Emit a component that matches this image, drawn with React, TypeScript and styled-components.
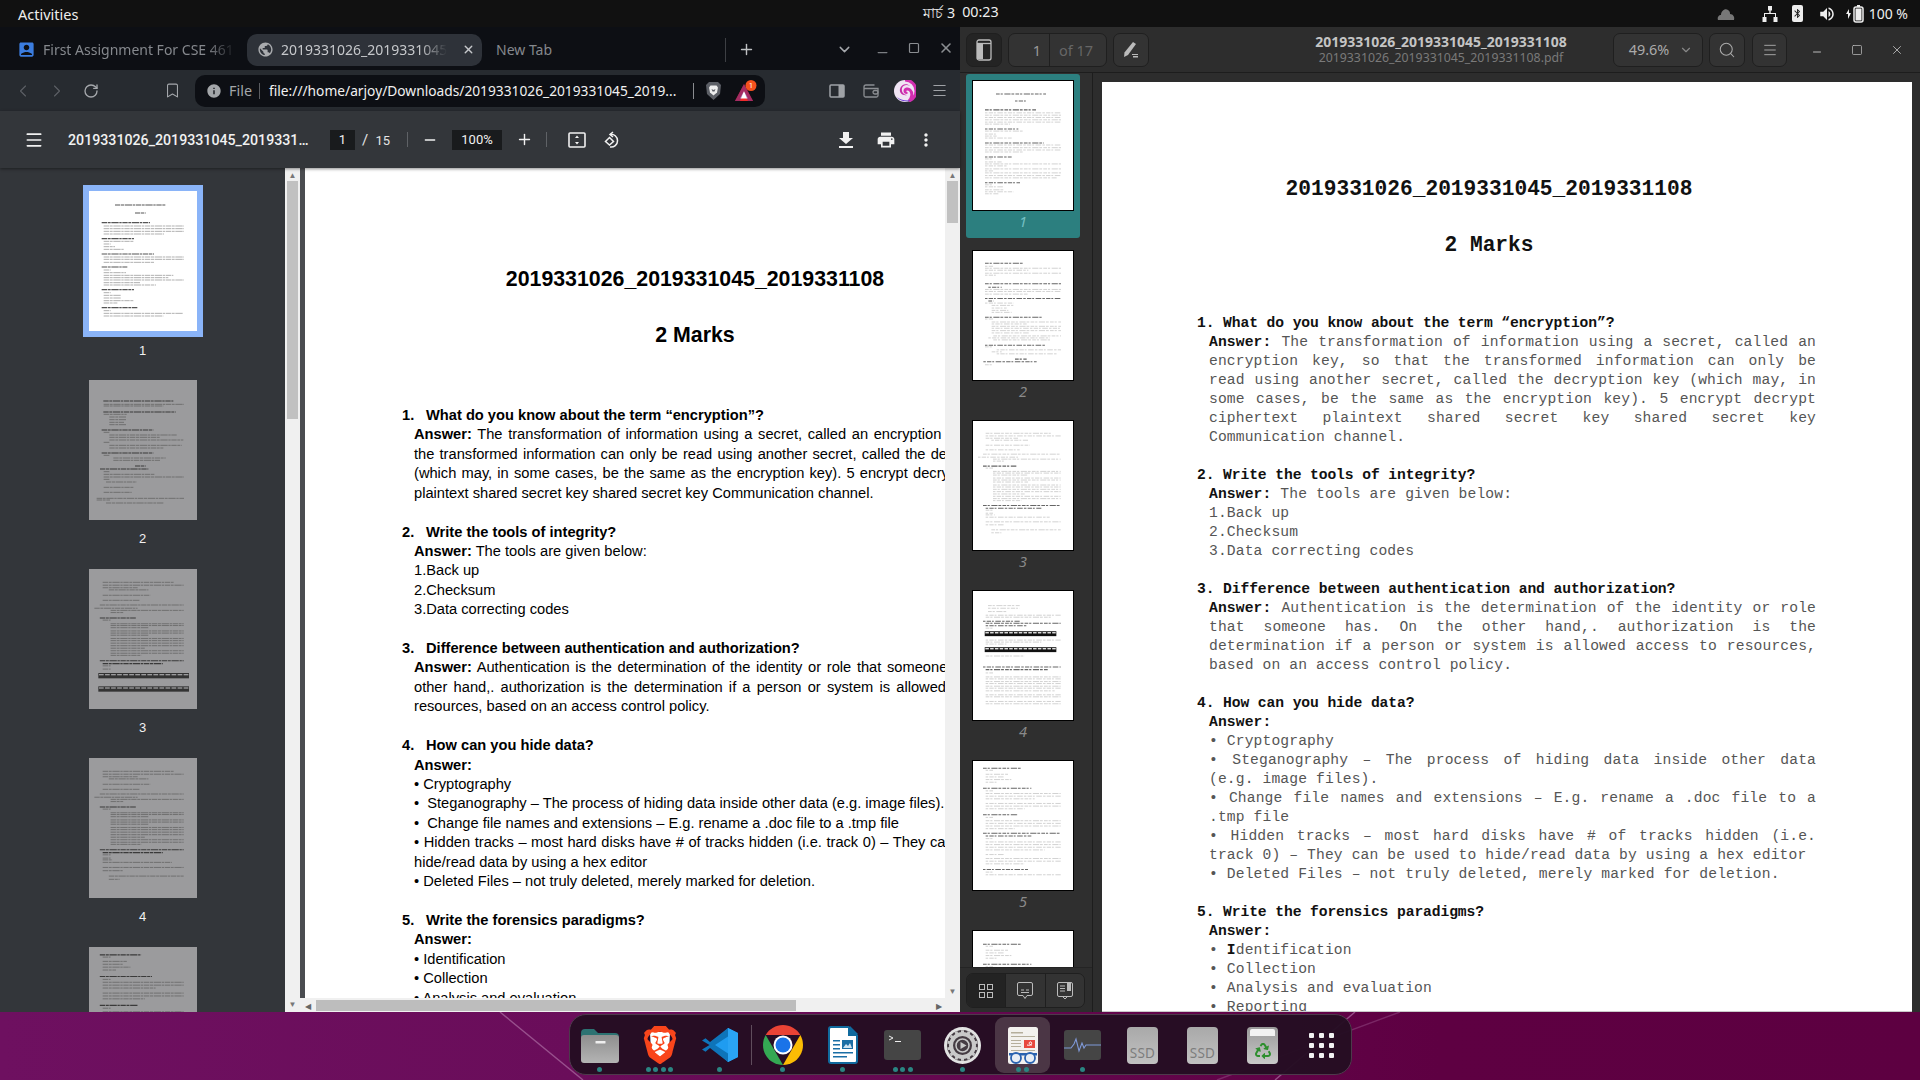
import React from "react";
import styled, { createGlobalStyle } from "styled-components";
import { SiBrave } from "react-icons/si";
import { FaRecycle } from "react-icons/fa";
import {
  MdPublic, MdPrint, MdMoreVert, MdInfo, MdAccountBox, MdVolumeUp, MdBluetooth,
} from "react-icons/md";
import {
  Menu, ChevronLeft, ChevronRight, ChevronDown, RotateCw, Bookmark, Plus, Minus, X, Square, Search,
} from "lucide-react";

const UI = `"Noto Sans", "Open Sans", sans-serif`;

const Global = createGlobalStyle`
  html, body { margin: 0; padding: 0; overflow: hidden; background: #5d0041; }
  * { box-sizing: border-box; }
`;

const Screen = styled.div`
  width: 1920px; height: 1080px; overflow: hidden; display: flex; flex-direction: column;
  font-family: ${UI};
`;

/* ---------- top bar ---------- */
const TopBar = styled.div`
  height: 27px; background: #111; color: #eee; font-size: 14.5px;
  display: grid; grid-template-columns: 1fr auto 1fr; align-items: center; padding: 0 12px 0 18px;
`;
const Clock = styled.div`display: flex; gap: 7px; margin: 1px 0 0 -4px; font-size: 14.3px;`;
const Tray = styled.div`display: flex; align-items: center; justify-content: flex-end; color: #eee;`;
const TrayText = styled.span`font-size: 14px;`;

/* ---------- windows ---------- */
const Windows = styled.div`display: flex; height: 985px;`;
const BrowserWindow = styled.div`width: 960px; display: flex; flex-direction: column; background: #33363a;`;
const TabStrip = styled.div`height: 43px; background: #0d0f14; display: flex; align-items: center; padding-left: 8px; color: #888b90; font-size: 14px; padding-top: 2px;`;
const Tab = styled.div<{ $active?: boolean }>`
  width: 235px; height: 32px; margin-right: 4px; border-radius: 10px; display: flex; align-items: center;
  gap: 7px; padding: 0 6px 0 10px; flex: none;
  background: ${(p) => (p.$active ? "#2e3239" : "transparent")};
  color: ${(p) => (p.$active ? "#c6c8cb" : "#85888d")};
`;
const TabTitle = styled.span<{ $fade?: boolean }>`
  flex: 1; overflow: hidden; white-space: nowrap;
  ${(p) => (p.$fade ? "mask-image: linear-gradient(90deg, #000 84%, transparent 100%);" : "")}
`;
const VSep = styled.div<{ $h: number; $c?: string; $m?: string }>`
  width: 1px; height: ${(p) => p.$h}px; background: ${(p) => p.$c || "#4a4d52"}; flex: none; margin: ${(p) => p.$m || "0"};
`;
const Slot = styled.div<{ $w?: number; $c?: string }>`
  width: ${(p) => p.$w || 32}px; display: flex; justify-content: center; align-items: center; flex: none;
  color: ${(p) => p.$c || "#a5a8ac"};
`;
const Gap = styled.div<{ $w: number }>`width: ${(p) => p.$w}px; flex: none;`;

const NavBar = styled.div`height: 41px; background: #272b30; display: flex; align-items: center; padding-left: 6px;`;
const UrlBar = styled.div`
  width: 570px; height: 32px; background: #0d0f14; border-radius: 10px; display: flex; align-items: center;
  padding-left: 11px; flex: none; font-size: 14.4px; color: #f1f1f1;
`;
const UrlKind = styled.span`color: #a3a6a9; margin-left: 7px; width: 30px;`;
const UrlText = styled.span`width: 424px; margin-left: 9px; white-space: nowrap; font-size: 13.75px;`;

const PdfBar = styled.div`
  height: 57px; background: #33363a; display: flex; align-items: center; color: #f1f1f1;
  box-shadow: 0 1px 3px rgba(0,0,0,.45); position: relative; z-index: 2; font-family: Roboto, sans-serif;
`;
const PdfName = styled.div`width: 245px; margin-left: 17px; font-size: 14.2px; font-weight: 500; white-space: nowrap;`;
const PdfBox = styled.div<{ $w: number }>`
  width: ${(p) => p.$w}px; height: 20px; background: #191b1d; display: flex; align-items: center; justify-content: center;
  font-size: 13px; flex: none;
`;
const PdfMuted = styled.span`font-size: 13px; margin-left: 7px; width: 36px; color: #e4e4e4;`;
const PdfSlash = styled.span`font-size: 15px; margin-right: 4px;`;

const Viewer = styled.div`flex: 1; display: flex; min-height: 0;`;
const ThumbRail = styled.div`
  width: 285px; background: #33363a; overflow: hidden; padding-top: 17px; display: flex; flex-direction: column;
  align-items: center; flex: none;
`;
const LeftThumb = styled.div<{ $on?: boolean }>`
  width: ${(p) => (p.$on ? 120 : 108)}px; height: ${(p) => (p.$on ? 152 : 140)}px; flex: none;
  ${(p) => (p.$on ? "border: 6px solid #8ab4f8; background: #fff;" : "")}
  svg { display: block; width: 100%; height: 100%; filter: blur(.25px); }
`;
const LeftLabel = styled.div<{ $on?: boolean }>`
  height: ${(p) => (p.$on ? 43 : 49)}px; display: flex; align-items: center; justify-content: center;
  padding-bottom: ${(p) => (p.$on ? 17 : 13)}px;
  color: #f1f1f1; font: 13px "Liberation Sans", sans-serif; flex: none;
`;
const ScrollCol = styled.div<{ $pb?: number }>`
  width: 15px; background: #f0f0f0; display: flex; flex-direction: column; align-items: center; flex: none; padding: 1px 0 ${(p) => p.$pb || 0}px;
`;
const Thumbie = styled.div<{ $t: number; $h: number }>`
  width: 11px; height: ${(p) => p.$h}px; margin-top: ${(p) => p.$t}px; background: #c1c1c1; flex: none;
`;
const ArrowBox = styled.div`height: 11px; color: #777; font-size: 8px; line-height: 11px; text-align: center; flex: none;`;
const ColFill = styled.div`flex: 1;`;
const DocColumn = styled.div`flex: 1; min-width: 0; display: flex; flex-direction: column;`;
const DocRow = styled.div`flex: 1; min-height: 0; display: flex;`;
const Gutter = styled.div`width: 5px; background: #4a4c50; flex: none;`;
const Sheet = styled.div`
  width: 640px; flex: none; background: #fff; overflow: hidden; color: #000;
  padding: 98px 0 0 97px; font: 14.67px/19.42px "Liberation Sans", Arial, sans-serif;
`;
const BigTitle = styled.div`width: 586px; text-align: center; font-size: 21.33px; font-weight: 700; line-height: 26px;`;
const Marks = styled(BigTitle)`margin: 30px 0 58px;`;
const Block = styled.div`margin-bottom: 19.42px;`;
const Head = styled.div`font-weight: 700; white-space: nowrap; display: flex; gap: 0;`;
const HeadNum = styled.span`width: 24px; flex: none;`;
const Line = styled.div<{ $w?: number }>`
  margin-left: 12px; width: 580px; white-space: nowrap; word-spacing: ${(p) => p.$w || 0}px;
`;
const HBar = styled.div`
  height: 14px; background: #f0f0f0; display: flex; align-items: center; color: #666; font-size: 8px; flex: none;
`;
const HThumb = styled.div`width: 480px; height: 11px; background: #bdbdbd; margin: 0 140px 0 5px; flex: none;`;

/* ---------- evince ---------- */
const ReaderWindow = styled.div`width: 960px; display: flex; flex-direction: column; background: #2d2d2d;`;
const ReaderBar = styled.div`
  height: 46px; flex: none; background: #2d2d2d; border-bottom: 1px solid #1d1d1d; display: flex; align-items: center; padding: 0 3px 0 6px;
`;
const RBtn = styled.div<{ $w?: number; $on?: boolean; $gap?: number }>`
  width: ${(p) => p.$w || 36}px; height: 34px; flex: none; border-radius: 7px; border: 1px solid #1f1f1f;
  background: ${(p) => (p.$on ? "#242424" : "#333")}; display: flex; align-items: center; justify-content: center;
  color: #aaa; gap: ${(p) => p.$gap || 7}px; font-size: 14.4px;
`;
const ZoomBtn = styled(RBtn)`padding-left: 6px;`;
const PageEntry = styled(RBtn)`gap: 0; justify-content: flex-start; width: 99px; font-size: 14.5px;`;
const PageNum = styled.div`width: 41px; text-align: right; padding-right: 8px; color: #9a9a9a; border-right: 1px solid #1f1f1f; height: 100%; line-height: 32px;`;
const PageOf = styled.div`padding-left: 9px; color: #666;`;
const Heading = styled.div`width: 300px; margin-left: 142px; text-align: center; flex: none; line-height: 15px;`;
const HeadTop = styled.div`font-size: 14px; font-weight: 700; color: #c4c4c4; line-height: 16px;`;
const HeadSub = styled.div`font-size: 12.3px; color: #7a7a7a;`;
const ReaderBody = styled.div`flex: 1; min-height: 0; display: flex;`;
const ReaderSide = styled.div`
  width: 133px; flex: none; background: #2f2f2f; display: flex; flex-direction: column; border-right: 1px solid #1d1d1d;
`;
const ThumbList = styled.div`flex: 1; min-height: 0; overflow: hidden; padding: 1px 6px 0;`;
const ThumbCell = styled.div<{ $on?: boolean }>`
  width: 114px; height: 164px; margin-bottom: 6px; padding-top: 6px; border-radius: 3px;
  background: ${(p) => (p.$on ? "#2c7f7f" : "transparent")}; display: flex; flex-direction: column; align-items: center;
`;
const ThumbPage = styled.div`
  width: 102px; height: 131px; background: #fff; border: 1px solid #000; flex: none;
  svg { display: block; width: 100%; height: 100%; }
`;
const ThumbNo = styled.div<{ $on?: boolean }>`
  font: italic 14.5px/20px ${UI}; color: ${(p) => (p.$on ? "#74c0c4" : "#8a8a8a")};
`;
const SideFoot = styled.div`height: 45px; flex: none; border-top: 1px solid #242424; padding: 5px 6px; background: #2d2d2d;`;
const Seg = styled.div`
  display: flex; height: 35px; width: 119px; border: 1px solid #1f1f1f; border-radius: 7px; overflow: hidden;
`;
const SegBtn = styled.div<{ $on?: boolean }>`
  flex: 1; display: flex; align-items: center; justify-content: center; color: #bbb;
  background: ${(p) => (p.$on ? "#232323" : "#333")}; border-right: 1px solid #1f1f1f;
  &:last-child { border-right: 0; }
`;
const ReaderMain = styled.div`flex: 1; min-width: 0; padding: 9px 7px 0 9px; overflow: hidden; background: #2d2d2d;`;
const RSheet = styled.div`
  height: 100%; width: 810px; background: #fff; overflow: hidden; padding: 95px 0 0 95px; color: #555;
  font: 14.67px/19px "Liberation Mono", "Courier New", monospace; border-bottom: 1px solid #c9c9c9;
`;
const RTitle = styled.div`width: 584px; text-align: center; font-size: 21.2px; font-weight: 700; line-height: 24px; color: #111;`;
const RMarks = styled(RTitle)`margin: 32px 0 57px;`;
const RBlock = styled.div`margin-bottom: 19px;`;
const RHead = styled.div`font-weight: 700; color: #111; white-space: nowrap; letter-spacing: -.1px;`;
const RLine = styled.div<{ $just?: boolean }>`
  margin-left: 12px; width: 607px; white-space: ${(p) => (p.$just ? "normal" : "nowrap")}; letter-spacing: .12px;
  ${(p) => (p.$just ? "text-align: justify; text-align-last: justify;" : "")}
  b { color: #111; }
`;

/* ---------- dock ---------- */
const DockRow = styled.div`
  height: 68px; position: relative; display: flex; justify-content: center; padding-top: 2px; flex: none;
  background: linear-gradient(90deg, #6e1060 0%, #6a0d5a 30%, #5e0042 75%, #5d0041 100%);
`;
const Streaks = styled.svg`position: absolute; left: 0; top: 0; width: 1920px; height: 68px;`;
const Dock = styled.div`
  position: relative; width: 783px; height: 61px; display: flex; border-radius: 17px; border: 1px solid #4d3a4b;
  background: rgba(36, 14, 34, .96);
`;
const DockItem = styled.div<{ $on?: boolean }>`
  width: 60px; flex: none; position: relative; display: flex; flex-direction: column; align-items: center;
  padding-top: 7px;
  ${(p) => p.$on ? `&::before { content: ""; position: absolute; left: 2px; right: 3px; top: 2px; bottom: 1px; border-radius: 9px; background: #4b3645; }` : ""}
`;
const IconBox = styled.div`height: 46px; display: flex; align-items: center; justify-content: center; position: relative;`;
const DotRow = styled.div`display: flex; gap: 2.5px; height: 5px; margin-top: -1px; position: relative;`;
const Dot = styled.div`width: 5px; height: 5px; border-radius: 50%; background: #2a8582;`;
const DockSep = styled.div`width: 1px; height: 40px; background: #5f4c5c; margin: 10px 1px 0; flex: none;`;

/* ---------- page data ---------- */
type L = [number, number, number, number?];
const P1L: L[] = [[105,345,497,1],[129,405,437,1],[158,305,450,1],[168,311,552],[176,311,552],[184,311,552],[192,311,492],[206,305,402,1],[214,311,402],[222,311,332],[230,311,345],[238,311,372],[252,305,462,1],[261,311,552],[268,311,552],[277,311,462],[291,305,382,1],[300,311,332],[308,311,378],[316,311,520],[323,311,505],[330,311,552],[338,311,420],[345,311,468],[359,305,402,1],[368,311,332],[376,311,362],[384,311,362],[392,311,402],[399,311,352],[413,305,412,1],[422,311,332],[430,311,548],[438,311,490]];
const P2L: L[] = [[693,310,520,1],[703,311,552],[708,311,490],[726,310,527,1],[733,311,380],[741,328,378],[749,328,378],[757,328,372],[764,328,378],[780,305,460,1],[787,311,330],[795,328,530],[802,328,480],[810,328,550],[817,311,330],[826,328,545],[834,328,490],[849,305,460,1],[856,311,330],[864,340,497],[871,340,480],[888,405,437,1],[897,300,445,1],[905,311,330],[913,311,465],[921,311,552],[928,311,330],[936,318,410],[952,311,400],[967,311,395],[985,290,552],[990,290,330],[999,318,490]];
const R1: L[] = [[72,108,258,1],[93,165,200,1],[120,75,228,1],[129,75,303],[136,75,303],[143,75,303],[150,75,303],[157,75,303],[163,75,150],[178,75,175,1],[184,75,188],[193,75,108],[199,75,110],[205,75,155],[220,75,252,1],[226,75,303],[234,75,303],[241,75,303],[247,75,190],[262,75,155,1],[268,75,100],[277,75,125],[283,75,303],[289,75,140],[298,75,303],[304,75,100],[310,75,303],[318,75,303],[325,75,290],[340,75,180,1],[346,75,100],[352,75,130],[361,75,130],[367,75,160],[373,75,115]];
const R2: L[] = [[580,75,190,1],[589,75,100],[595,75,303],[601,75,205],[610,75,303],[616,75,110],[642,75,303,1],[652,85,125,1],[659,75,303],[665,75,303],[673,75,205],[686,75,303,1],[694,85,100,1],[700,75,160],[707,95,160],[715,95,140],[722,95,145],[728,95,155],[743,75,245,1],[748,75,100],[757,95,303],[763,95,200],[770,95,303],[776,95,303],[783,95,303],[790,95,210],[799,100,303],[805,85,270],[811,100,270],[827,75,258,1],[832,75,100],[841,110,303],[847,95,125],[853,110,290],[869,165,200,1],[877,70,230,1],[886,75,100]];
const R3: L[] = [[55,63,260],[63,63,288],[70,63,160],[76,80,190],[91,63,195],[105,63,165],[118,55,288],[127,40,160],[133,85,288],[139,85,120],[154,55,155,1],[160,63,85],[170,85,288],[175,85,288],[181,85,190],[190,85,288],[196,85,288],[202,85,190],[211,85,288],[217,85,288],[224,85,288],[231,85,288],[238,85,180],[245,85,288],[252,85,288],[258,85,170],[273,55,288,1],[281,63,230,1],[287,63,85],[296,63,85],[301,63,90],[308,63,255],[322,63,288],[331,63,120],[346,80,288],[355,80,110]];
const R4: L[] = [[572,70,165],[580,70,165],[590,70,125],[601,63,288],[607,63,260],[619,55,165,1],[625,63,288,1],[633,63,185,1],[640,63,85],[676,63,288],[682,63,230],[688,63,125],[724,63,180],[757,55,288,1],[765,63,250,1],[775,63,85],[787,63,288],[793,63,288],[801,63,288],[807,63,288],[815,63,288],[821,63,288],[829,63,270],[841,63,288],[847,63,288],[861,63,288],[868,63,288]];
const R5: L[] = [[40,55,170,1],[46,63,85],[58,63,130],[66,63,120],[74,63,140],[82,63,100],[100,55,200,1],[108,63,85],[116,63,288],[124,63,288],[132,63,210],[146,63,288],[154,63,288],[162,63,180],[180,55,160,1],[188,63,85],[198,63,288],[206,63,288],[214,63,288],[222,63,150],[236,55,288,1],[244,63,200,1],[252,63,85],[262,63,288],[270,63,288],[278,63,288],[286,63,240],[300,63,120],[312,63,288],[320,63,288],[328,63,180],[345,55,190,1],[353,63,85],[361,63,288]];

const lineColor = (bold: boolean, dim?: boolean, soft?: boolean) => {
  if (dim) return bold ? "#3a3a3a" : "#6a6a6a";
  if (soft) return bold ? "#666" : "#c6c6c6";
  return bold ? "#555" : "#a4a4a4";
};

type Tbl = [number, number, number];
const Page = ({ lines, ox, oy, k = 1, tables = [], dim, soft }: { lines: L[]; ox: number; oy: number; k?: number; tables?: Tbl[]; dim?: boolean; soft?: boolean }) => (
  <svg viewBox="0 0 324 420" preserveAspectRatio="none">
    {dim && <rect width="324" height="420" fill="#9b9b9d" />}
    {lines.map(([y, a, b, bold], i) => (
      <line
        key={i}
        x1={(a - ox) * k} x2={(b - ox) * k} y1={(y - oy) * k} y2={(y - oy) * k}
        stroke={lineColor(!!bold, dim, soft)}
        strokeWidth={bold ? 3.4 : 2.6}
        strokeDasharray={soft ? (i % 2 ? "8 4 14 3 6 5 18 4" : "12 3 7 5 20 3 9 4") : "16 2 9 2 22 2 7 2"}
      />
    ))}
    {tables.map(([y, a, b], i) => (
      <g key={"t" + i}>
        <rect x={a} y={y} width={b - a} height={16} fill={dim ? "#333" : "#111"} />
        {Array.from({ length: 15 }).map((_, j) => (
          <rect key={j} x={a + 2 + (j * (b - a)) / 15} y={y + 3} width={(b - a) / 15 - 4} height={4} fill={dim ? "#9b9b9d" : "#fff"} />
        ))}
      </g>
    ))}
  </svg>
);

const P1 = <Page lines={P1L} ox={267} oy={63} />;
const P2 = <Page lines={P2L} ox={267} oy={630} dim />;
const P3 = <Page lines={R3.slice(0, 30)} ox={25} oy={18} k={1.08} dim tables={[[312, 28, 300], [352, 28, 300]]} />;
const P4 = <Page lines={R3} ox={25} oy={18} k={1.08} dim />;
const P5 = <Page lines={R5} ox={25} oy={18} k={1.08} dim />;

const leftThumbs = [P2, P3, P4];
const readerThumbs = [
  <Page lines={R1} ox={39} oy={33} k={1.08} soft />,
  <Page lines={R2} ox={39} oy={543} k={1.08} soft />,
  <Page lines={R3} ox={25} oy={18} k={1.08} soft />,
  <Page lines={R4} ox={25} oy={528} k={1.08} soft tables={[[131, 38, 270], [183, 38, 270]]} />,
  <Page lines={R5} ox={25} oy={18} k={1.08} soft />,
  <Page lines={R5.slice(0, 8)} ox={25} oy={0} k={1.08} soft />,
];

/* ---------- small svg icons ---------- */
const FitIcon = () => (
  <svg width="18" height="16" viewBox="0 0 18 16" fill="none" stroke="#f1f1f1" strokeWidth="1.6">
    <rect x="1" y="1" width="16" height="14" rx="1" />
    <path d="M9 3.5l-2 2.5h4zM9 12.5l-2-2.5h4z" fill="#f1f1f1" stroke="none" />
  </svg>
);
const RotateIcon = () => (
  <svg width="18" height="18" viewBox="0 0 18 18" fill="none" stroke="#f1f1f1" strokeWidth="1.5">
    <path d="M6 3.4A6.4 6.4 0 1 1 6 16" />
    <path d="M9 1L6 3.4 9 6" />
    <path d="M5.5 6.5L9.5 10.5 5.5 14 1.5 10.5z" />
  </svg>
);
const DownloadIcon = () => (
  <svg width="14" height="16" viewBox="0 0 14 16" fill="#f1f1f1">
    <path d="M4 0h6v6h4L7 12 0 6h4zM0 14h14v2H0z" />
  </svg>
);
const SidePanelIcon = () => (
  <svg width="16" height="14" viewBox="0 0 16 14" fill="none" stroke="#9fa2a6" strokeWidth="1.5">
    <rect x="1" y="1" width="14" height="12" rx="1" /><rect x="9.5" y="1" width="5.5" height="12" fill="#9fa2a6" stroke="none" />
  </svg>
);
const WalletIcon = () => (
  <svg width="16" height="14" viewBox="0 0 16 14" fill="none" stroke="#8b8e92" strokeWidth="1.3">
    <path d="M1 4.5V11.5a1.5 1.5 0 0 0 1.5 1.5h11a1.5 1.5 0 0 0 1.5-1.5V4.5zM1 4.5V3a2 2 0 0 1 2-2h8.5" /><rect x="10" y="6.5" width="5" height="3.5" rx="1.7" />
  </svg>
);
const ProfileIcon = () => (
  <svg width="22" height="22" viewBox="0 0 22 22">
    <circle cx="11" cy="11" r="11" fill="#f0e4f4" />
    <path d="M11 0a11 11 0 0 1 11 11 11 11 0 0 1-7 10c3-3 4-8 1-11-2-2-5-1-5 1 0 1 1 2 2 1" fill="none" stroke="#d22fb0" strokeWidth="3" />
    <path d="M3 17c3 5 11 5 14 3-5 1-11 0-14-3z" fill="#6a38d6" />
    <path d="M6 9c1-5 7-6 10-3-3-2-7-1-8 2-1 4 2 7 5 7-4 1-8-2-7-6z" fill="#c52aa8" />
  </svg>
);
const ShieldIcon = () => (
  <svg width="15" height="18" viewBox="0 0 15 18">
    <path d="M3 0h9l3 3-1 9-6.500 6L1 12 0 3z" fill="#5c5f66" />
    <path d="M4.500 3.500h6l1.500 2-1 5-3.500 3-3.500-3-1-5z" fill="#eee" />
    <path d="M5.500 7l2 1 2-1-1 2.500h-2z" fill="#5c5f66" />
  </svg>
);
const BatIcon = () => (
  <svg width="24" height="22" viewBox="0 0 24 22">
    <path d="M9 4L18 21H0z" fill="#ef2b2b" />
    <path d="M9 11L13 18.500H5z" fill="#fff" />
    <path d="M9 4L18 21H13L9 11 5 21H0z" fill="#662d91" opacity=".55" />
    <circle cx="16" cy="5.500" r="5.500" fill="#f4511e" />
    <text x="16" y="8" textAnchor="middle" fontSize="7" fontFamily="Roboto, sans-serif" fill="#fff">1</text>
  </svg>
);
const PanelToggle = () => (
  <svg width="16" height="22" viewBox="0 0 16 22" fill="none" stroke="#bbb" strokeWidth="1.3">
    <rect x="1" y="1" width="14" height="20" rx="2" /><rect x="1" y="5" width="6" height="15" fill="#bbb" stroke="none" />
    <path d="M1 4.500h14" />
  </svg>
);
const PencilIcon = () => (
  <svg width="16" height="16" viewBox="0 0 16 16" fill="#bbb">
    <path d="M10 0l3 2-8 11-4 2 .5-4.500z" /><path d="M9 12h6v1H9zM10 14h5v1.500h-5z" />
  </svg>
);
const GridIcon = () => (
  <svg width="14" height="14" viewBox="0 0 14 14" fill="none" stroke="#bbb">
    <rect x=".5" y=".5" width="5" height="5" /><rect x="8.500" y=".5" width="5" height="5" /><rect x=".5" y="8.500" width="5" height="5" /><rect x="8.500" y="8.500" width="5" height="5" />
  </svg>
);
const NoteIcon = () => (
  <svg width="16" height="18" viewBox="0 0 16 18" fill="none" stroke="#bbb">
    <path d="M2 .5h12a1.500 1.500 0 0 1 1.500 1.500v10a1.500 1.500 0 0 1-1.500 1.500h-4L8 16.500 6 13.500H2A1.500 1.500 0 0 1 .5 12V2A1.500 1.500 0 0 1 2 .5z" />
    <path d="M4 8h3M9 8h3M4 10.500h8" />
  </svg>
);
const BookIcon = () => (
  <svg width="16" height="18" viewBox="0 0 16 18" fill="none" stroke="#bbb">
    <rect x=".5" y=".5" width="15" height="14" rx="1.500" /><path d="M3 4h5M3 6.500h5M3 9h5" /><rect x="10" y="0" width="4" height="9" fill="#bbb" stroke="none" /><path d="M6 15l2 2 2-2" />
  </svg>
);
const CloudIcon = () => (
  <svg width="18" height="12" viewBox="0 0 18 12" fill="#777"><path d="M1 12c-1-3 1-5 3-5 0-4 4-7 7-5 2 1 2 3 2 4 3 0 5 3 4 6z" /></svg>
);
const NetIcon = () => (
  <svg width="16" height="16" viewBox="0 0 16 16" fill="#eee"><path d="M6 0h4v4.500H8.700V7H14v4h1.500v5h-4v-5H13V8H3v3h1.500v5h-4v-5H2V7h5.300V4.500H6z" /></svg>
);
const BattIcon = () => (
  <svg width="20" height="18" viewBox="0 0 20 18" fill="none"><path d="M0 9l3-5v4h2l-3 6v-5z" fill="#eee" /><rect x="8" y="2" width="9" height="15" rx="2" stroke="#eee" strokeWidth="1.500" /><rect x="9.500" y="3.500" width="6" height="12" fill="#eee" /><rect x="11" y="0" width="3" height="2" fill="#eee" /></svg>
);

const Folder = () => (
  <svg width="38" height="35" viewBox="0 0 38 35">
    <path d="M0 5a4 4 0 0 1 4-4h9l4 4h17a4 4 0 0 1 4 4v6H0z" fill="#2c7272" />
    <rect y="7" width="38" height="28" rx="3" fill="url(#fg)" />
    <rect x="14.500" y="13" width="10" height="2.500" rx=".5" fill="#eee" />
    <defs><linearGradient id="fg" x1="0" y1="0" x2="0" y2="1"><stop offset="0" stopColor="#8e8e8e" /><stop offset="1" stopColor="#b4b4b4" /></linearGradient></defs>
  </svg>
);
const BraveBack = styled.svg`position: absolute; left: 0; top: 0; width: 34px; height: 38px;`;
const BraveWrap = styled.div`position: relative; width: 34px; height: 38px;`;
const BraveFront = styled(SiBrave)`position: absolute; left: -2px; top: 0;`;
const BraveIcon = () => (
  <BraveWrap>
    <BraveBack viewBox="0 0 34 38"><path d="M7 6h20l-1 20-9 9-9-9z" fill="#fff" /></BraveBack>
    <BraveFront size={38} color="#f9451b" />
  </BraveWrap>
);
const VsCode = () => (
  <svg width="36" height="36" viewBox="0 0 36 36">
    <path d="M26 1L36 6V30L26 35 10 20z" fill="#1f9cf0" />
    <path d="M26 1V35L36 30V6z" fill="#2aa4f4" />
    <path d="M26 9.500L13 18l13 8.500V35L8 21l-4.500 3.800L0 22.500 7.500 18 0 13.500 3.500 11.200 8 15 26 1z" fill="#0e74b9" />
  </svg>
);
const Chrome = () => (
  <svg width="40" height="40" viewBox="-20 -20 40 40">
    <path d="M-17.320 -10A20 20 0 0 1 17.320 -10L0 -10 z" fill="#ea4335" />
    <path d="M-17.320 -10L-8.660 5 0 20A20 20 0 0 1 -17.320 -10z" fill="#34a853" />
    <path d="M17.320 -10L8.660 5 0 20A20 20 0 0 0 17.320 -10z" fill="#fbbc04" />
    <circle r="9.500" fill="#fff" /><circle r="7.500" fill="#1a73e8" />
  </svg>
);
const Writer = () => (
  <svg width="30" height="38" viewBox="0 0 30 38">
    <path d="M3 0h18l9 9v26a3 3 0 0 1-3 3H3a3 3 0 0 1-3-3V3a3 3 0 0 1 3-3z" fill="#106a9e" />
    <path d="M3 2h17v8h8v25a1 1 0 0 1-1 1H3a1 1 0 0 1-1-1V3a1 1 0 0 1 1-1z" fill="#fff" />
    <path d="M22 0l8 8h-8z" fill="#106a9e" />
    <path d="M5 14h7v1.500H5zM5 18h7v1.500H5zM5 22h7v1.500H5zM5 26h20v1.500H5zM5 30h14v1.500H5z" fill="#1a6ea5" />
    <rect x="14" y="14" width="11" height="9" fill="#1a6ea5" /><path d="M15 22l3-4 2 2 2-3 2 5z" fill="#cfe3f1" />
  </svg>
);
const Terminal = () => (
  <svg width="37" height="30" viewBox="0 0 37 30">
    <rect width="37" height="30" rx="3" fill="#454545" />
    <path d="M5 6l4 2-4 2" stroke="#eee" strokeWidth="1" fill="none" /><rect x="11" y="11" width="6" height="1" fill="#eee" />
  </svg>
);
const Gear = () => {
  const teeth = Array.from({ length: 14 });
  return (
    <svg width="37" height="37" viewBox="-18.500 -18.500 37 37">
      <circle r="18.500" fill="#e2e2e2" /><circle r="15.500" fill="#453c43" />
      <circle r="11.500" fill="none" stroke="#c9c9c9" strokeWidth="4" />
      {teeth.map((_, i) => <rect key={i} x="-1.500" y="-15.300" width="3" height="4.500" fill="#c9c9c9" transform={`rotate(${(i * 360) / 14})`} />)}
      <circle r="6.500" fill="none" stroke="#c9c9c9" strokeWidth="1.500" />
      <path d="M-2 -3.500L4 0-2 3.500z" fill="#c9c9c9" />
    </svg>
  );
};
const Reader = () => (
  <svg width="30" height="37" viewBox="0 0 30 37">
    <rect width="30" height="37" rx="2.500" fill="#f3f1ee" />
    <path d="M3 5h12v1.500H3zM3 9h24v1H3zM3 13h10v1H3zM3 16h10v1H3zM3 19h10v1H3zM3 23h24v1H3z" fill="#b5ae9b" />
    <rect x="16" y="13" width="11" height="8" fill="#e8493f" />
    <path d="M19 18c3 1 6-1 4-3-2-1-3 3 1 3" stroke="#fff" fill="none" />
    <path d="M1 26h28v2.500H1z" fill="#2a63b0" />
    <circle cx="8" cy="31" r="5" fill="#e8eef5" stroke="#2a63b0" strokeWidth="1.800" /><circle cx="22" cy="31" r="5" fill="#e8eef5" stroke="#2a63b0" strokeWidth="1.800" />
  </svg>
);
const Monitor = () => (
  <svg width="37" height="30" viewBox="0 0 37 30">
    <rect width="37" height="30" rx="3" fill="#454545" />
    <path d="M0 18h7l3-4 2-5 3 12 3-8 2 5 2-3h15" fill="none" stroke="#7f99d8" strokeWidth="1.100" />
  </svg>
);
const DiskFace = styled.div`
  width: 31px; height: 37px; border-radius: 4px; background: linear-gradient(#a9a9a9, #c1c1c1); color: #7d7d7d;
  font: 13.5px/1 ${UI}; text-align: right; display: flex; align-items: flex-end; justify-content: center; padding-bottom: 3px; letter-spacing: .2px;
`;
const TrashFace = styled.div`
  width: 31px; height: 37px; border-radius: 4px; background: linear-gradient(#999, #c9c9c9); display: flex; flex-direction: column; align-items: center;
`;
const TrashTop = styled.div`width: 25px; height: 7px; background: #f2f2f2; margin: 2px 0 7px; border-radius: 2px 2px 0 0;`;
const AppGrid = styled.div`display: grid; grid-template-columns: repeat(3, 5px); gap: 5px 5px; margin-left: -3px;`;
const AppCell = styled.i`width: 5px; height: 5px; border-radius: 1px; background: #f2f2f2;`;

const Streak = () => (
  <Streaks viewBox="0 0 1920 68" fill="none" stroke="#a8679e" strokeWidth="1.400" opacity=".75">
    <path d="M500 0L583 68" />
    <path d="M1355 0L1275 68" />
    <path d="M1400 0L1217 68" opacity=".5" />
  </Streaks>
);

const dockApps: { el: React.ReactNode; dots: number; on?: boolean }[] = [
  { el: <Folder />, dots: 1 },
  { el: <BraveIcon />, dots: 4 },
  { el: <VsCode />, dots: 1 },
  { el: <Chrome />, dots: 1 },
  { el: <Writer />, dots: 1 },
  { el: <Terminal />, dots: 3 },
  { el: <Gear />, dots: 1 },
  { el: <Reader />, dots: 2, on: true },
  { el: <Monitor />, dots: 1 },
  { el: <DiskFace>SSD</DiskFace>, dots: 0 },
  { el: <DiskFace>SSD</DiskFace>, dots: 0 },
  { el: <TrashFace><TrashTop /><FaRecycle size={16} color="#2f8f2f" /></TrashFace>, dots: 0 },
  { el: <AppGrid>{Array.from({ length: 9 }).map((_, i) => <AppCell key={i} />)}</AppGrid>, dots: 0 },
];

const BtBadge = styled(MdBluetooth)`background: #eee; color: #222; border-radius: 2px; width: 11px;`;
const TabIcon = styled(MdAccountBox)`flex: none; margin-left: -1px;`;
const TabGlobe = styled(MdPublic)`flex: none;`;
const TabClose = styled(X)`flex: none; margin: 0 1px 0 8px;`;
const Low = styled.span`display: flex; margin-top: 5px;`;
const High = styled.span`display: flex; margin-top: -3px;`;

export default function App() {
  return (
    <Screen>
      <Global />
      <TopBar>
        <span>Activities</span>
        <Clock><span>মার্চ 3</span><span>00:23</span></Clock>
        <Tray>
          <CloudIcon /><Gap $w={27} /><NetIcon /><Gap $w={14} /><BtBadge size={17} /><Gap $w={15} />
          <MdVolumeUp size={18} /><Gap $w={10} /><BattIcon /><Gap $w={3} /><TrayText>100 %</TrayText>
        </Tray>
      </TopBar>

      <Windows>
        <BrowserWindow>
          <TabStrip>
            <Tab>
              <TabIcon size={19} color="#3b7de0" />
              <TabTitle $fade>First Assignment For CSE 461</TabTitle>
            </Tab>
            <Tab $active>
              <TabGlobe size={17} color="#a9abae" />
              <TabTitle $fade>2019331026_2019331045_</TabTitle>
              <TabClose size={13} color="#c6c8cb" strokeWidth={2.5} />
            </Tab>
            <Tab><TabTitle>New Tab</TabTitle></Tab>
            <VSep $h={24} $c="#3d3f44" />
            <Gap $w={4} />
            <Slot><Plus size={17} color="#bfc1c4" /></Slot>
            <Gap $w={66} />
            <Slot><ChevronDown size={17} color="#a5a8ac" /></Slot>
            <Gap $w={6} />
            <Slot><Low><Minus size={15} color="#7b7e82" /></Low></Slot>
            <Slot><High><Square size={12} color="#8a8d91" strokeWidth={2.4} /></High></Slot>
            <Slot><High><X size={16} color="#8a8d91" strokeWidth={2.4} /></High></Slot>
          </TabStrip>
          <NavBar>
            <Slot $w={34}><ChevronLeft size={20} color="#5d6065" strokeWidth={1.3} /></Slot>
            <Slot $w={34}><ChevronRight size={20} color="#5d6065" strokeWidth={1.3} /></Slot>
            <Slot $w={33}><RotateCw size={16} color="#a5a8ac" /></Slot>
            <Gap $w={48} />
            <Slot $w={34}><Bookmark size={17} color="#a5a8ac" strokeWidth={1.5} /></Slot>
            <Gap $w={6} />
            <UrlBar>
              <MdInfo size={16} color="#a3a6a9" />
              <UrlKind>File</UrlKind>
              <VSep $h={16} $c="#5a5c60" />
              <UrlText>file:///home/arjoy/Downloads/2019331026_2019331045_2019...</UrlText>
              <VSep $h={16} $c="#8a8c90" />
              <Gap $w={12} />
              <ShieldIcon />
              <Gap $w={14} />
              <BatIcon />
            </UrlBar>
            <Gap $w={55} />
            <Slot $w={34}><SidePanelIcon /></Slot>
            <Slot $w={34}><WalletIcon /></Slot>
            <Slot $w={34}><ProfileIcon /></Slot>
            <Slot $w={34}><Menu size={17} color="#9fa2a6" strokeWidth={1.5} /></Slot>
          </NavBar>
          <PdfBar>
            <Gap $w={17} />
            <Slot $w={34} $c="#f1f1f1"><Menu size={20} strokeWidth={2} /></Slot>
            <PdfName>2019331026_2019331045_2019331…</PdfName>
            <Gap $w={17} />
            <PdfBox $w={25}>1</PdfBox>
            <PdfMuted><PdfSlash>/</PdfSlash> 15</PdfMuted>
            <VSep $h={15} $c="#5f6266" $m="0 0 0 9px" />
            <Slot $w={44} $c="#f1f1f1"><Minus size={16} /></Slot>
            <PdfBox $w={50}>100%</PdfBox>
            <Slot $w={44} $c="#f1f1f1"><Plus size={17} /></Slot>
            <VSep $h={15} $c="#5f6266" />
            <Gap $w={13} />
            <Slot $w={34}><FitIcon /></Slot>
            <Gap $w={2} />
            <Slot $w={34}><RotateIcon /></Slot>
            <Gap $w={199} />
            <Slot $w={34}><DownloadIcon /></Slot>
            <Gap $w={6} />
            <Slot $w={34} $c="#f1f1f1"><MdPrint size={20} /></Slot>
            <Gap $w={6} />
            <Slot $w={34} $c="#f1f1f1"><MdMoreVert size={20} /></Slot>
          </PdfBar>
          <Viewer>
            <ThumbRail>
              <LeftThumb $on>{P1}</LeftThumb>
              <LeftLabel $on>1</LeftLabel>
              {leftThumbs.map((t, i) => (
                <React.Fragment key={i}>
                  <LeftThumb>{t}</LeftThumb>
                  <LeftLabel>{i + 2}</LeftLabel>
                </React.Fragment>
              ))}
              <LeftThumb>{P5}</LeftThumb>
            </ThumbRail>
            <ScrollCol $pb={3}>
              <ArrowBox>▲</ArrowBox>
              <Thumbie $t={1} $h={238} />
              <ColFill />
              <ArrowBox>▼</ArrowBox>
            </ScrollCol>
            <DocColumn>
              <DocRow>
                <Gutter />
                <Sheet>
                  <BigTitle>2019331026_2019331045_2019331108</BigTitle>
                  <Marks>2 Marks</Marks>
                  <Block>
                    <Head><HeadNum>1.</HeadNum>What do you know about the term “encryption”?</Head>
                    <Line $w={1.6}><b>Answer:</b> The transformation of information using a secret, called an encryption</Line>
                    <Line $w={1.1}>the transformed information can only be read using another secret, called the decryption</Line>
                    <Line $w={1.1}>(which may, in some cases, be the same as the encryption key). 5 encrypt decrypt</Line>
                    <Line>plaintext shared secret key shared secret key Communication channel.</Line>
                  </Block>
                  <Block>
                    <Head><HeadNum>2.</HeadNum>Write the tools of integrity?</Head>
                    <Line><b>Answer:</b> The tools are given below:</Line>
                    <Line>1.Back up</Line>
                    <Line>2.Checksum</Line>
                    <Line>3.Data correcting codes</Line>
                  </Block>
                  <Block>
                    <Head><HeadNum>3.</HeadNum>Difference between authentication and authorization?</Head>
                    <Line $w={1.6}><b>Answer:</b> Authentication is the determination of the identity or role that someone</Line>
                    <Line $w={2.1}>other hand,. authorization is the determination if a person or system is allowed</Line>
                    <Line>resources, based on an access control policy.</Line>
                  </Block>
                  <Block>
                    <Head><HeadNum>4.</HeadNum>How can you hide data?</Head>
                    <Line><b>Answer:</b></Line>
                    <Line>• Cryptography</Line>
                    <Line>•&nbsp; Steganography – The process of hiding data inside other data (e.g. image files).</Line>
                    <Line>•&nbsp; Change file names and extensions – E.g. rename a .doc file to a .tmp file</Line>
                    <Line $w={0.5}>• Hidden tracks – most hard disks have # of tracks hidden (i.e. track 0) – They can</Line>
                    <Line>hide/read data by using a hex editor</Line>
                    <Line>• Deleted Files – not truly deleted, merely marked for deletion.</Line>
                  </Block>
                  <Block>
                    <Head><HeadNum>5.</HeadNum>Write the forensics paradigms?</Head>
                    <Line><b>Answer:</b></Line>
                    <Line>• Identification</Line>
                    <Line>• Collection</Line>
                    <Line>• Analysis and evaluation</Line>
                  </Block>
                </Sheet>
                <ScrollCol $pb={2}>
                  <ArrowBox>▲</ArrowBox>
                  <Thumbie $t={1} $h={42} />
                  <ColFill />
                  <ArrowBox>▼</ArrowBox>
                </ScrollCol>
              </DocRow>
              <HBar>
                <Gap $w={5} />◀
                <HThumb />▶
              </HBar>
            </DocColumn>
          </Viewer>
        </BrowserWindow>

        <ReaderWindow>
          <ReaderBar>
            <RBtn $on><PanelToggle /></RBtn>
            <Gap $w={6} />
            <PageEntry><PageNum>1</PageNum><PageOf>of 17</PageOf></PageEntry>
            <Gap $w={6} />
            <RBtn><PencilIcon /></RBtn>
            <Heading>
              <HeadTop>2019331026_2019331045_2019331108</HeadTop>
              <HeadSub>2019331026_2019331045_2019331108.pdf</HeadSub>
            </Heading>
            <Gap $w={22} />
            <ZoomBtn $w={90} $gap={10}>49.6%<ChevronDown size={14} color="#888" /></ZoomBtn>
            <Gap $w={6} />
            <RBtn><Search size={18} strokeWidth={1.4} /></RBtn>
            <Gap $w={7} />
            <RBtn $w={35}><Menu size={16} strokeWidth={1.4} /></RBtn>
            <Gap $w={10} />
            <Slot $w={40}><Low><Minus size={12} color="#bbb" /></Low></Slot>
            <Slot $w={40}><Square size={12} color="#bbb" strokeWidth={1.5} /></Slot>
            <Slot $w={40}><X size={14} color="#bbb" strokeWidth={1.5} /></Slot>
          </ReaderBar>
          <ReaderBody>
            <ReaderSide>
              <ThumbList>
                {readerThumbs.map((t, i) => (
                  <ThumbCell key={i} $on={i === 0}>
                    <ThumbPage>{t}</ThumbPage>
                    {i < 5 && <ThumbNo $on={i === 0}>{i + 1}</ThumbNo>}
                  </ThumbCell>
                ))}
              </ThumbList>
              <SideFoot>
                <Seg>
                  <SegBtn $on><GridIcon /></SegBtn>
                  <SegBtn><NoteIcon /></SegBtn>
                  <SegBtn><BookIcon /></SegBtn>
                </Seg>
              </SideFoot>
            </ReaderSide>
            <ReaderMain>
              <RSheet>
                <RTitle>2019331026_2019331045_2019331108</RTitle>
                <RMarks>2 Marks</RMarks>
                <RBlock>
                  <RHead>1. What do you know about the term “encryption”?</RHead>
                  <RLine $just><b>Answer:</b> The transformation of information using a secret, called an</RLine>
                  <RLine $just>encryption key, so that the transformed information can only be</RLine>
                  <RLine $just>read using another secret, called the decryption key (which may, in</RLine>
                  <RLine $just>some cases, be the same as the encryption key). 5 encrypt decrypt</RLine>
                  <RLine $just>ciphertext plaintext shared secret key shared secret key</RLine>
                  <RLine>Communication channel.</RLine>
                </RBlock>
                <RBlock>
                  <RHead>2. Write the tools of integrity?</RHead>
                  <RLine><b>Answer:</b> The tools are given below:</RLine>
                  <RLine>1.Back up</RLine>
                  <RLine>2.Checksum</RLine>
                  <RLine>3.Data correcting codes</RLine>
                </RBlock>
                <RBlock>
                  <RHead>3. Difference between authentication and authorization?</RHead>
                  <RLine $just><b>Answer:</b> Authentication is the determination of the identity or role</RLine>
                  <RLine $just>that someone has. On the other hand,. authorization is the</RLine>
                  <RLine $just>determination if a person or system is allowed access to resources,</RLine>
                  <RLine>based on an access control policy.</RLine>
                </RBlock>
                <RBlock>
                  <RHead>4. How can you hide data?</RHead>
                  <RLine><b>Answer:</b></RLine>
                  <RLine>• Cryptography</RLine>
                  <RLine $just>• Steganography – The process of hiding data inside other data</RLine>
                  <RLine>(e.g. image files).</RLine>
                  <RLine $just>• Change file names and extensions – E.g. rename a .doc file to a</RLine>
                  <RLine>.tmp file</RLine>
                  <RLine $just>• Hidden tracks – most hard disks have # of tracks hidden (i.e.</RLine>
                  <RLine>track 0) – They can be used to hide/read data by using a hex editor</RLine>
                  <RLine>• Deleted Files – not truly deleted, merely marked for deletion.</RLine>
                </RBlock>
                <RBlock>
                  <RHead>5. Write the forensics paradigms?</RHead>
                  <RLine><b>Answer:</b></RLine>
                  <RLine>• <b>I</b>dentification</RLine>
                  <RLine>• Collection</RLine>
                  <RLine>• Analysis and evaluation</RLine>
                  <RLine>• Reporting</RLine>
                </RBlock>
              </RSheet>
            </ReaderMain>
          </ReaderBody>
        </ReaderWindow>
      </Windows>

      <DockRow>
        <Streak />
        <Dock>
          {dockApps.map((a, i) => (
            <React.Fragment key={i}>
              {i === 3 && <DockSep />}
              <DockItem $on={a.on}>
                <IconBox>{a.el}</IconBox>
                <DotRow>{Array.from({ length: a.dots }).map((_, d) => <Dot key={d} />)}</DotRow>
              </DockItem>
            </React.Fragment>
          ))}
        </Dock>
      </DockRow>
    </Screen>
  );
}
